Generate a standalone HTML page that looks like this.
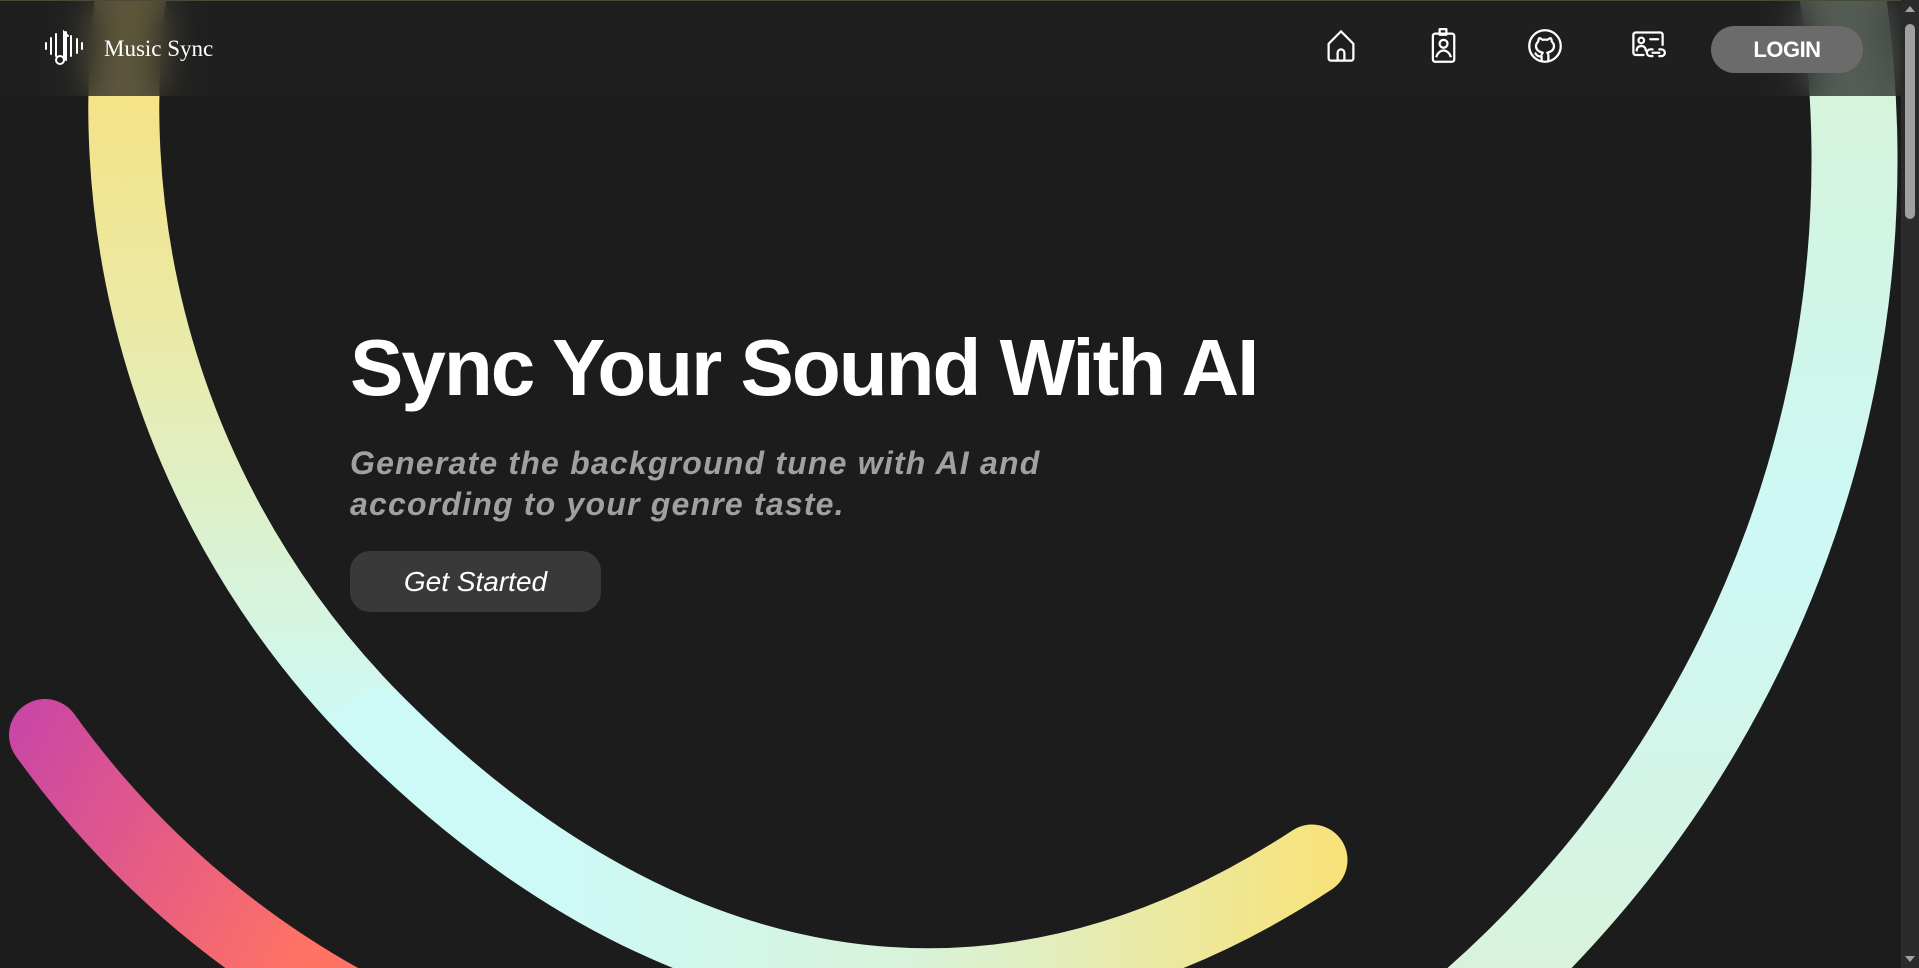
<!DOCTYPE html>
<html><head><meta charset="utf-8"><style>
html,body{margin:0;padding:0;width:1919px;height:968px;overflow:hidden;background:#1c1c1c;font-family:"Liberation Sans",sans-serif}
svg.bg{position:absolute;left:0;top:0}
header{position:absolute;left:0;top:0;width:1901px;height:96px;background:rgba(33,33,33,0.72);backdrop-filter:blur(18px);-webkit-backdrop-filter:blur(18px);border-top:1px solid #4a4a38;box-sizing:border-box}
.logo{position:absolute;left:44px;top:29px}
.brand{position:absolute;left:104px;top:35px;color:#fff;font-family:"Liberation Serif",serif;font-size:23px}
.ico{position:absolute;top:27px;width:36px;height:36px}
.login{position:absolute;left:1711px;top:25px;width:152px;height:47px;border-radius:24px;background:#6b6b6b;color:#fff;font-weight:bold;font-size:22px;line-height:47px;text-align:center;letter-spacing:-0.5px}
h1{position:absolute;left:350px;top:322px;margin:0;color:#fff;font-size:80px;font-weight:bold;letter-spacing:-2px;white-space:nowrap}
.sub{position:absolute;left:350px;top:443px;margin:0;color:#a0a0a0;font-size:32px;font-weight:bold;font-style:italic;line-height:41px;letter-spacing:1.2px;white-space:nowrap}
.btn{position:absolute;left:350px;top:551px;width:251px;height:61px;border-radius:20px;background:#393939;color:#fff;font-style:italic;font-size:28px;line-height:61px;text-align:center}
.sb{position:absolute;right:0;top:0;width:18px;height:968px;background:#2b2b2b}
.thumb{position:absolute;left:4px;top:24px;width:10px;height:195px;border-radius:5px;background:#a0a0a0}
</style></head><body>
<svg class="bg" width="1919" height="968" viewBox="0 0 1919 968">
<defs>
<linearGradient id="gA1" x1="0" y1="0" x2="0" y2="968" gradientUnits="userSpaceOnUse"><stop offset="0" stop-color="#f8e07a"/><stop offset="0.35" stop-color="#eaeaa8"/><stop offset="0.75" stop-color="#cdf9f6"/><stop offset="1" stop-color="#cdf9f6"/></linearGradient>
<linearGradient id="gA2" x1="560" y1="0" x2="1340" y2="0" gradientUnits="userSpaceOnUse"><stop offset="0" stop-color="#cdf9f6"/><stop offset="0.45" stop-color="#d8f3da"/><stop offset="1" stop-color="#f8e27a"/></linearGradient>
<linearGradient id="gB" x1="0" y1="0" x2="0" y2="968" gradientUnits="userSpaceOnUse"><stop offset="0" stop-color="#d6f3d6"/><stop offset="0.55" stop-color="#cdf8f6"/><stop offset="1" stop-color="#d8f3dc"/></linearGradient>
<linearGradient id="gP" x1="0" y1="720" x2="330" y2="900" gradientUnits="userSpaceOnUse"><stop offset="0" stop-color="#c844a8"/><stop offset="1" stop-color="#ff7264"/></linearGradient>
</defs>
<path d="M698,-713 A872,872 0 0 0 379,723" fill="none" stroke="url(#gA1)" stroke-width="71"/>
<path d="M379,723 C655,999 986,1074 1312,860" fill="none" stroke="url(#gA2)" stroke-width="71" stroke-linecap="round"/>
<path d="M1787,-223 A1121,1121 0 0 1 1294,1131" fill="none" stroke="url(#gB)" stroke-width="86"/>
<path d="M45,735 A910,910 0 0 0 360,1010" fill="none" stroke="url(#gP)" stroke-width="72" stroke-linecap="round"/>
</svg>
<header>
<svg class="logo" width="44" height="36" viewBox="0 0 44 36" fill="none" stroke="#fff" stroke-width="2" stroke-linecap="round">
<path d="M2,13v6M7,8v16M12,4v22M22,2v28M27,6v20M33,9v14M38,13v6"/>
<circle cx="16" cy="30" r="4"/><path d="M20,30V2l4,4"/>
</svg>
<div class="brand">Music Sync</div>
<svg class="ico" style="left:1323px" viewBox="0 0 32 32" fill="none" stroke="#fff" stroke-width="2" stroke-linejoin="round"><path d="M5,14L16,3l11,11v13a2,2 0 0 1-2,2H7a2,2 0 0 1-2-2z"/><path d="M13,29v-7a3,3 0 0 1 6,0v7"/></svg>
<svg class="ico" style="left:1425px" viewBox="0 0 32 32" fill="none" stroke="#fff" stroke-width="2" stroke-linejoin="round"><rect x="7" y="5" width="19" height="25" rx="2"/><rect x="13" y="1" width="6" height="5"/><circle cx="16.5" cy="14" r="3.5"/><path d="M10,26c1-4 4-6 6.5-6s5.5,2 6.5,6"/></svg>
<svg class="ico" style="left:1527px" viewBox="0 0 32 32" fill="none" stroke="#fff" stroke-width="2" stroke-linejoin="round"><circle cx="16" cy="16" r="14"/><path d="M13,30v-5c-4,1-5-2-6-3M19,30v-6c0-1-1-2-1-2 4-1 6-3 6-6 0-2-1-3-2-4 0-1 0-2-1-3-1 0-2 1-3 1.5a10,10 0 0 0-4,0c-1-.5-2-1.5-3-1.5-1 1-1 2-1 3-1 1-2 2-2 4 0 3 2 5 6 6 0 0-1 1-1 2"/></svg>
<svg class="ico" style="left:1630px" viewBox="0 0 32 32" fill="none" stroke="#fff" stroke-width="2" stroke-linecap="round" stroke-linejoin="round"><path d="M12,24H5a2,2 0 0 1-2-2V6a2,2 0 0 1 2-2h22a2,2 0 0 1 2,2v9"/><circle cx="10" cy="11" r="2.5"/><path d="M6,20c0-3 2-4 4-4s4,1 4,4M18,10h7"/><path d="M20,19h-2a3,3 0 0 0 0,6h2M26,19h2a3,3 0 0 1 0,6h-2M20,22h6"/></svg>
<div class="login">LOGIN</div>
</header>
<h1>Sync Your Sound With AI</h1>
<p class="sub">Generate the background tune with AI and<br>according to your genre taste.</p>
<div class="btn">Get Started</div>
<div class="sb"><div style="position:absolute;left:4px;top:6px;width:0;height:0;border-left:5px solid transparent;border-right:5px solid transparent;border-bottom:6px solid #a0a0a0"></div><div class="thumb"></div><div style="position:absolute;left:4px;bottom:6px;width:0;height:0;border-left:5px solid transparent;border-right:5px solid transparent;border-top:6px solid #a0a0a0"></div></div>
</body></html>
